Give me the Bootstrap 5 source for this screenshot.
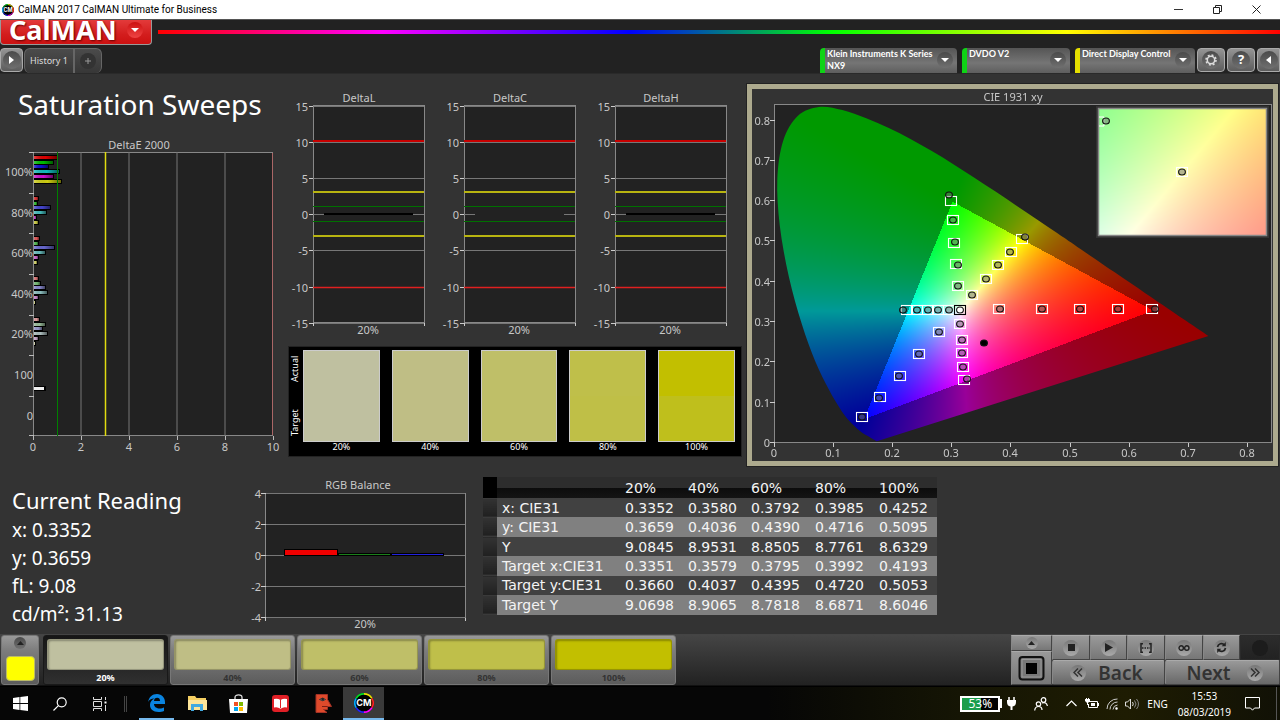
<!DOCTYPE html>
<html lang="en">
<head>
<meta charset="utf-8">
<meta name="viewport" content="width=device-width, initial-scale=1">
<title>CalMAN 2017 CalMAN Ultimate for Business</title>
<link rel="stylesheet" href="https://cdn.jsdelivr.net/npm/bootstrap@5.3.0/dist/css/bootstrap.min.css">
<style>
body{font-family:"Noto Sans","Open Sans",sans-serif;font-size:11px;line-height:1.2;background:#333;color:#ddd}
button{border:0;padding:0;color:inherit;font:inherit;background:none}
svg{display:block}
.titlebar{height:19px;background:#fff;color:#000;font-family:Roboto,sans-serif;font-size:10px;padding-left:2px}
.win-btn{width:39px;height:19px}
.brandbar{height:27px;background:#222;border-top:1px solid #555}
.brand{width:152px;height:25px;padding-bottom:4px;background:linear-gradient(#e33a3a,#d31d1d 60%,#c11);border:1px solid #999;border-top:0;border-radius:0 0 4px 4px;color:#fff}
.brand-name{font-size:27px;font-weight:700;line-height:20px;text-shadow:1px 1px 2px #600}
.disc{width:16px;height:16px;border-radius:50%;background:linear-gradient(#4a4a4a,#707070);display:flex;align-items:center;justify-content:center;flex:none}
.brand .disc{background:linear-gradient(#c11,#e44)}
.rainbow{height:4px;margin:10px 0 0 6px;background:linear-gradient(90deg,#f00,#f0f 20%,#00f 42%,#0f0 60%,#ff0 81%,#f00)}
.tabsbar{height:28px;padding-top:2px;background:#222;border-bottom:1px solid #2a2a2a}
.side-btn{height:24px;width:28px;border:1px solid #aaa;border-radius:4px;background:linear-gradient(#949494,#5c5c5c)}
.side-btn .disc{width:18px;height:18px}
.tab-item{height:25px;background:linear-gradient(#4b4b4b,#373737);border:1px solid #666;border-bottom:0}
.device{height:25px;border-radius:4px 4px 0 0;background:linear-gradient(#555,#757575 60%,#5e5e5e);color:#fff;font-family:Lato,sans-serif;font-size:9px;font-weight:700;line-height:12px;text-align:left;white-space:nowrap}
.device.ok{border-left:5px solid #0fd316}
.device.warn{border-left:5px solid #e6e000}
.board{background:#333;display:grid;grid-template-columns:288fr 454fr 538fr;grid-template-rows:auto auto;align-content:start}
.board h1{font-size:28px;line-height:36px;color:#fff;font-weight:400;padding:12px 0 16px 18px}
.board svg{width:100%;height:auto}
.board svg text{fill:#c8c8c8;font-size:11px}
.swatches{background:#000;height:111px;padding:3px 6px 0 0;border:1px solid #222;color:#fff;font-size:9px}
.swatch-item{flex:1 1 0}
.swatch{height:92px;border:1px solid #ccc}
.vert{writing-mode:vertical-rl;transform:rotate(180deg);font-size:9px;line-height:12px;height:92px;padding:6px 0;width:14px}
.cie-pane{padding:10px 2px 0 5px}
.cie{border:5px solid #adaa8e;outline:1px solid #222;background:#333}
.cie canvas{position:absolute;inset:0;width:100%;height:100%}
.lower{grid-column:1/-1;display:grid;grid-template-columns:246fr 237fr 454fr 343fr}
.reading{color:#fff;font-size:19px;line-height:28px;padding:18px 0 0 12px}
.reading h2{font-size:22px;line-height:32px;font-weight:400}
.results{height:138px;width:100%;font-family:"DejaVu Sans",sans-serif;font-size:14px;line-height:18px;color:#f4f4f4;table-layout:fixed;border-collapse:collapse}
.results th,.results td{padding:0;font-weight:400;white-space:nowrap}
.results thead th{height:21px;background:linear-gradient(#2d2d2d 50%,#0c0c0c 52%,#141414)}
.results tbody tr{background:#414141}
.results tbody tr:nth-child(even){background:#808080}
.results .sel{background:linear-gradient(#333,#202020);border-bottom:1px solid #3a3a3a}
.results thead .sel{background:#000}
.results tbody th:nth-child(2){padding-left:5px}
.strip{height:52px;background:linear-gradient(#454545,#222);border-top:1px solid #444;border-bottom:1px solid #111}
.metal{background:linear-gradient(#999,#7d7d7d 30%,#5c5c5c);border-radius:3px;border:1px solid #777}
.patch{width:125px;height:50px;color:#333;font-size:9px;font-weight:700}
.patch.active{background:linear-gradient(#161616,#303030);border-color:#191919;color:#fff}
.patch-color{height:31px;margin:3px 3px 0;border-radius:3px;border:1px solid rgba(0,0,0,.22);box-shadow:inset 1px 1px 2px rgba(0,0,0,.3)}
.patch-name{line-height:16px}
.transport{width:269px;display:grid;grid-template-columns:41px 38px 37px 38px 38px 37px 40px;grid-template-rows:25px 25px}
.transport button{background:linear-gradient(#999,#777);border:1px solid;border-color:#aaa #444 #444 #888;display:flex;align-items:center;justify-content:center}
.transport .disc{background:linear-gradient(#777,#aaa)}
.transport .nav-btn{color:#333;font-size:19px;font-weight:600;line-height:22px;background:linear-gradient(#999,#686868);border-radius:2px}
.stop-stack{grid-row:span 2}
.taskbar{height:34px;background:linear-gradient(90deg,#060606 60%,#151504 75%,#1e1c02 88%,#111106);color:#fff;border-top:1px solid #000}
.task-btn{width:41px;height:33px;display:flex;align-items:center;justify-content:center}
.task-btn.open{border-bottom:2px solid #76b9ed}
.task-btn.current{background:#3a3a3a}
.charge{width:40px;height:16px;border:2px solid #fff;background:linear-gradient(90deg,#1b9e4b 53%,#000 53%);font-size:12px;line-height:12px}
.tray{font-size:10px}
.clock{line-height:16px}
</style>
</head>
<body class="d-flex flex-column min-vh-100">

<header>
  <div class="titlebar d-flex align-items-center">
    <svg class="me-1" width="12" height="12" viewBox="0 0 24 24"><use href="#cm-logo"/></svg>
    <span class="flex-grow-1">CalMAN 2017 CalMAN Ultimate for Business</span>
    <button class="win-btn" aria-label="Minimize"><svg class="mx-auto" width="9" height="9" viewBox="0 0 9 9"><path d="M0 4.500h9" stroke="#333"/></svg></button>
    <button class="win-btn" aria-label="Restore"><svg class="mx-auto" width="9" height="9" viewBox="0 0 9 9"><path d="M.5 2.500h6v6h-6zM2.500 2.500v-2h6v6h-2" fill="none" stroke="#222"/></svg></button>
    <button class="win-btn me-1" aria-label="Close"><svg class="mx-auto" width="9" height="9" viewBox="0 0 9 9"><path d="M.5.5l8 8m0-8l-8 8" stroke="#222"/></svg></button>
  </div>
  <div class="brandbar d-flex">
    <button class="brand d-flex align-items-center justify-content-between ps-2 pe-1">
      <span class="brand-name">CalMAN</span>
      <span class="disc me-1"><svg width="8" height="4" viewBox="0 0 8 4"><path d="M0 0h8L4 4z" fill="#fff"/></svg></span>
    </button>
    <div class="rainbow flex-grow-1"></div>
  </div>
  <nav class="tabsbar d-flex align-items-start">
    <button class="side-btn d-flex align-items-center justify-content-center" style="width:23px" aria-label="Expand"><span class="disc"><svg width="5" height="8" viewBox="0 0 5 8"><path d="M0 0v8l5-4z" fill="#fff"/></svg></span></button>
    <button class="tab-item rounded-start text-nowrap" style="width:50px;margin-left:1px;font-size:9px">History 1</button>
    <button class="tab-item rounded-end d-flex align-items-center justify-content-center" style="width:28px" aria-label="Add history"><span class="disc" style="background:#333"><svg width="6" height="6" viewBox="0 0 6 6"><path d="M3 0v6M0 3h6" stroke="#999"/></svg></span></button>
    <div class="ms-auto d-flex" style="gap:5px">
      <button class="device ok d-flex justify-content-between" style="width:137px;padding:0 4px 0 2px"><span>Klein Instruments K Series<br>NX9</span><span class="disc mt-1"><svg width="8" height="4" viewBox="0 0 8 4"><path d="M0 0h8L4 4z" fill="#fff"/></svg></span></button>
      <button class="device ok d-flex justify-content-between" style="width:108px;padding:0 4px 0 2px"><span>DVDO V2</span><span class="disc mt-1"><svg width="8" height="4" viewBox="0 0 8 4"><path d="M0 0h8L4 4z" fill="#fff"/></svg></span></button>
      <button class="device warn d-flex justify-content-between" style="width:120px;padding:0 4px 0 2px"><span>Direct Display Control</span><span class="disc mt-1"><svg width="8" height="4" viewBox="0 0 8 4"><path d="M0 0h8L4 4z" fill="#fff"/></svg></span></button>
    </div>
    <div class="d-flex" style="gap:2px;margin-left:2px">
      <button class="side-btn d-flex align-items-center justify-content-center" aria-label="Settings"><span class="disc"><svg width="12" height="12" viewBox="0 0 12 12" fill="none" stroke="#ddd"><circle cx="6" cy="6" r="3.700" stroke-width="1.500"/><circle cx="6" cy="6" r="5" stroke-width="1.600" stroke-dasharray="1.960 1.960"/></svg></span></button>
      <button class="side-btn d-flex align-items-center justify-content-center fw-bold text-white" style="font-size:13px" aria-label="Help"><span class="disc">?</span></button>
      <button class="side-btn d-flex align-items-center justify-content-center rounded-end-0" style="width:23px" aria-label="Collapse"><span class="disc"><svg width="5" height="8" viewBox="0 0 5 8"><path d="M5 0v8L0 4z" fill="#fff"/></svg></span></button>
    </div>
  </nav>
</header>

<main class="board flex-grow-1">
  <section>
    <h1 class="mb-0">Saturation Sweeps</h1>
    <svg viewBox="0 138 288 322" id="deltaE" role="img" aria-label="DeltaE 2000 chart"></svg>
  </section>
  <section>
    <svg viewBox="288 74 454 272" id="deltas" role="img" aria-label="DeltaL, DeltaC and DeltaH charts"></svg>
    <div class="swatches d-flex">
      <div class="vert d-flex justify-content-between flex-row-reverse"><span>Actual</span><span>Target</span></div>
      <div class="d-flex flex-grow-1 text-center" id="swatches" style="gap:12px"></div>
    </div>
  </section>
  <section class="cie-pane">
    <div class="cie">
      <div class="position-relative">
        <canvas id="gamut" width="521" height="372"></canvas>
        <svg class="position-relative" viewBox="752 89 521 372" id="cie" role="img" aria-label="CIE 1931 xy chromaticity chart"></svg>
      </div>
    </div>
  </section>
  <div class="lower">
    <section class="reading">
      <h2 class="mb-0">Current Reading</h2>
      <div>x: 0.3352</div><div>y: 0.3659</div><div>fL: 9.08</div><div>cd/m²: 31.13</div>
    </section>
    <svg viewBox="246 466 237 165" id="rgb" role="img" aria-label="RGB Balance chart"></svg>
    <div style="padding-top:11px">
      <table class="results">
        <colgroup><col style="width:14px"><col><col style="width:63px"><col style="width:63px"><col style="width:64px"><col style="width:64px"><col style="width:58px"></colgroup>
        <thead><tr><th class="sel"></th><th></th><th>20%</th><th>40%</th><th>60%</th><th>80%</th><th>100%</th></tr></thead>
        <tbody>
          <tr><th class="sel"></th><th>x: CIE31</th><td>0.3352</td><td>0.3580</td><td>0.3792</td><td>0.3985</td><td>0.4252</td></tr>
          <tr><th class="sel"></th><th>y: CIE31</th><td>0.3659</td><td>0.4036</td><td>0.4390</td><td>0.4716</td><td>0.5095</td></tr>
          <tr><th class="sel"></th><th>Y</th><td>9.0845</td><td>8.9531</td><td>8.8505</td><td>8.7761</td><td>8.6329</td></tr>
          <tr><th class="sel"></th><th>Target x:CIE31</th><td>0.3351</td><td>0.3579</td><td>0.3795</td><td>0.3992</td><td>0.4193</td></tr>
          <tr><th class="sel"></th><th>Target y:CIE31</th><td>0.3660</td><td>0.4037</td><td>0.4395</td><td>0.4720</td><td>0.5053</td></tr>
          <tr><th class="sel"></th><th>Target Y</th><td>9.0698</td><td>8.9065</td><td>8.7818</td><td>8.6871</td><td>8.6046</td></tr>
        </tbody>
      </table>
    </div>
  </div>
</main>

<div class="strip d-flex">
  <button class="metal d-flex flex-column align-items-center" style="width:38px;height:50px;margin-left:1px" aria-label="Current patch">
    <span class="disc" style="width:12px;height:12px;margin-top:1px"><svg width="7" height="4" viewBox="0 0 7 4"><path d="M0 4h7L3.500 0z" fill="#222"/></svg></span>
    <span class="rounded-1 mt-auto" style="width:29px;height:25px;background:#ff0;border:1px solid #bb6;margin-bottom:3px"></span>
  </button>
  <div class="d-flex ms-1" id="patches" style="gap:2px"></div>
  <div class="transport ms-auto">
    <div class="stop-stack d-flex flex-column">
      <button style="height:16px" aria-label="Raise"><span class="disc" style="width:12px;height:12px"><svg width="7" height="4" viewBox="0 0 7 4"><path d="M0 4h7L3.500 0z" fill="#222"/></svg></span></button>
      <button class="flex-grow-1" aria-label="Stop reading"><svg width="27" height="25" viewBox="0 0 27 25"><rect x="1.500" y="1" width="24" height="22.500" rx="3" fill="#777" stroke="#111" stroke-width="2"/><rect x="4" y="3.500" width="19" height="17.500" fill="none" stroke="#999"/><path d="M8 7h11v11H8z" fill="#000"/></svg></button>
    </div>
    <button aria-label="Stop"><span class="disc"><svg width="7" height="7" viewBox="0 0 7 7"><path d="M0 0h7v7H0z" fill="#222"/></svg></span></button>
    <button aria-label="Play"><span class="disc"><svg width="8" height="9" viewBox="0 0 8 9"><path d="M0 0v9l8-4.500z" fill="#222"/></svg></span></button>
    <button aria-label="Range"><span class="disc"><svg width="12" height="10" viewBox="0 0 12 10" fill="none" stroke="#222" stroke-width="1.500"><path d="M3 .8H1v8.400h2M9 .8h2v8.400H9"/><path d="M2 5h8" stroke-dasharray="1.500 1"/></svg></span></button>
    <button aria-label="Continuous"><span class="disc"><svg width="12" height="6" viewBox="0 0 12 6" fill="none" stroke="#222" stroke-width="1.400"><circle cx="3.200" cy="3" r="2.200"/><circle cx="8.800" cy="3" r="2.200"/></svg></span></button>
    <button aria-label="Refresh"><span class="disc"><svg width="11" height="11" viewBox="0 0 11 11" fill="none" stroke="#222" stroke-width="1.700"><path d="M1.500 5A4 4 0 0 1 8.500 3M9.500 6A4 4 0 0 1 2.500 8"/><path d="M9.800 0v4.200H5.700zM1.200 11V6.800h4.100z" fill="#222" stroke="none"/></svg></span></button>
    <button style="background:linear-gradient(#2c2c2c,#222);border-color:#2a2a2a" aria-label="Record"><span class="disc" style="background:#1c1c1c"></span></button>
    <button class="nav-btn gap-2" style="grid-column:span 3"><span class="disc"><svg width="10" height="9" viewBox="0 0 10 9" fill="none" stroke="#333" stroke-width="1.500"><path d="M5 .5l-4 4 4 4M9 .5l-4 4 4 4"/></svg></span><span class="px-1">Back</span></button>
    <button class="nav-btn gap-2" style="grid-column:span 3"><span class="px-1">Next</span><span class="disc ms-1"><svg width="10" height="9" viewBox="0 0 10 9" fill="none" stroke="#333" stroke-width="1.500"><path d="M1 .5l4 4-4 4M5 .5l4 4-4 4"/></svg></span></button>
  </div>
</div>

<footer class="taskbar d-flex align-items-center">
  <button class="task-btn" aria-label="Start"><svg width="15" height="15" viewBox="0 0 15 15" fill="#fff"><path d="M0 2l6.500-.9v6H0zM7.300 1L15 0v7.100H7.300zM0 7.900h6.500v6L0 13zM7.300 7.900H15V15l-7.700-1z"/></svg></button>
  <button class="task-btn" style="width:38px" aria-label="Search"><svg width="14" height="14" viewBox="0 0 14 14" fill="none" stroke="#fff" stroke-width="1.200"><circle cx="8.700" cy="5.300" r="4.500"/><path d="M5.400 8.600L.5 13.500"/></svg></button>
  <button class="task-btn" aria-label="Task view"><svg width="15" height="14" viewBox="0 0 15 14" fill="none" stroke="#ddd"><path d="M1.500 0v2.500h8V0M1.500 14v-2.500h8V14M1.500 4.500h8v5h-8zM13.500 0v3M13.500 8v6"/><path d="M12.500 4.500h2v2h-2z" fill="#fff" stroke="none"/></svg></button>
  <span style="width:3px;height:16px;border:solid #444;border-width:0 1px;margin:0 12px 0 4px"></span>
  <button class="task-btn open" style="width:35px" aria-label="Edge"><svg width="17" height="18" viewBox="0 0 17 18"><path d="M0 8C1 3 4 0 9 0c5 0 8 4 8 8v2H6c0 3 3 4.500 5.500 4.500 2 0 3.500-.5 4.500-1V17c-1.500.7-3.500 1-5.500 1C5 18 2 15 2 11c0-3 2-5.500 4.500-6.500C3 4.500 1 6 0 8zm6-1h6c0-2-1-3.200-2.800-3.200C7.300 3.800 6.200 5 6 7z" fill="#0a84e0"/></svg></button>
  <button class="task-btn" style="width:47px" aria-label="File Explorer"><svg width="19" height="17" viewBox="0 0 19 17"><path d="M0 1h7l1.500 2H18v12H0z" fill="#f5cf62"/><path d="M0 5h19v10H0z" fill="#fde59a"/><path d="M3 9h12v7h-3v-4H6v4H3z" fill="#41a9e0"/></svg></button>
  <button class="task-btn" style="width:35px" aria-label="Store"><svg width="19" height="20" viewBox="0 0 19 20"><path d="M6 6V3.500C6 0 13 0 13 3.500V6" fill="none" stroke="#ddd" stroke-width="1.300"/><path d="M0 5h19l-1 14H1z" fill="#fff"/><path d="M5 8h4v4H5z" fill="#f25022"/><path d="M10 8h4v4h-4z" fill="#7fba00"/><path d="M5 13h4v4H5z" fill="#00a4ef"/><path d="M10 13h4v4h-4z" fill="#ffb900"/></svg></button>
  <button class="task-btn" style="width:48px" aria-label="Reader"><svg width="17" height="17" viewBox="0 0 17 17"><rect width="17" height="17" rx="3" fill="#e01f26"/><path d="M2 4q3.500-1 6.500 1Q11.500 3 15 4v8.500q-3.500-1-6.500 1.200Q5.500 11.500 2 12.500z" fill="#fff"/><path d="M8.500 5v8" stroke="#e01f26"/></svg></button>
  <button class="task-btn" style="width:39px" aria-label="Face application"><svg width="17" height="19" viewBox="0 0 17 19"><path d="M1 .5h11.500v5L16.500 12.500h-4v3H8.500L12 18.500H1z" fill="#df4a2b" stroke="#a33226"/><path d="M4.500 5.500q3.500-3 6 0-2.500 2.500-6 0z" fill="#c98" stroke="#333"/><circle cx="7.700" cy="5.300" r="1.200" fill="#222"/><path d="M7 12.500h5.500" stroke="#7a1d12"/></svg></button>
  <button class="task-btn open current" aria-label="CalMAN"><svg width="20" height="20" viewBox="0 0 24 24"><use href="#cm-logo"/></svg></button>
  <div class="tray ms-auto d-flex align-items-center">
    <div class="charge text-center">53%</div><span style="width:2px;height:9px;background:#fff;margin-right:5px"></span>
    <svg width="9" height="13" viewBox="0 0 9 13"><path d="M2 0v3M7 0v3" stroke="#fff" stroke-width="1.500"/><path d="M0 3h9v2q0 4-3.500 4.500V13h-2V9.500Q0 9 0 5z" fill="#fff"/></svg>
    <svg style="margin-left:18px" width="14" height="14" viewBox="0 0 14 14" fill="none" stroke="#fff" stroke-width="1.200"><circle cx="9.500" cy="3" r="2.300"/><circle cx="4.500" cy="7" r="2.200"/><path d="M.7 13.500q.3-4 3.800-4t3.500 3.500M8 6q4.500-1.500 5.400 3"/></svg>
    <svg style="margin-left:18px" width="11" height="7" viewBox="0 0 11 7" fill="none" stroke="#fff" stroke-width="1.200"><path d="M.5 6l5-5 5 5"/></svg>
    <svg style="margin-left:8px" width="14" height="11" viewBox="0 0 14 11"><path d="M3 3.500h9.500v6H3.500V6" fill="none" stroke="#fff"/><path d="M13 5h1v3h-1zM6 5h4v3H6zM0 1h1V0h1v1h1V0h1v1h1v2L3 5v2H2V5L0 3z" fill="#fff"/></svg>
    <svg style="margin-left:7px" width="12" height="12" viewBox="0 0 12 12" fill="none" stroke="#ccc"><path d="M1 11A10 10 0 0 1 11.500 1M4 11.500A7.500 7.500 0 0 1 11.500 4M7 11.500A5 5 0 0 1 11.500 7" /><circle cx="10.500" cy="10.500" r="1" fill="#fff"/></svg>
    <svg style="margin-left:7px" width="14" height="12" viewBox="0 0 14 12" fill="none" stroke="#ddd"><path d="M.5 4h2l3-3v10l-3-3h-2zM7.500 4q1.500 2 0 4"/><path d="M9.500 2.500q3 3.500 0 7M11.500 1q4 5 0 10" stroke="#888"/></svg>
    <span class="ms-2">ENG</span>
    <div class="clock text-center" style="margin-left:10px">15:53<br>08/03/2019</div>
    <button style="margin-left:14px" aria-label="Notifications"><svg width="15" height="14" viewBox="0 0 15 14" fill="none" stroke="#fff"><path d="M.5.5h14v10.500H9.500L7.500 13.200 5.500 11H.5z"/></svg></button>
    <span style="width:1px;height:33px;background:#555;margin:0 3px 0 16px"></span>
  </div>
</footer>

<svg width="0" height="0" class="position-absolute" aria-hidden="true">
  <defs>
    <symbol id="cm-logo" viewBox="0 0 24 24"><circle cx="12" cy="12" r="12" fill="#000"/><g fill="none" stroke-width="2"><path d="M12 1A11 11 0 0 1 21.500 6.500" stroke="#e8e000"/><path d="M21.500 6.500A11 11 0 0 1 21.500 17.500" stroke="#f22"/><path d="M21.500 17.500A11 11 0 0 1 12 23" stroke="#f0f"/><path d="M12 23A11 11 0 0 1 2.500 17.500" stroke="#22f"/><path d="M2.500 17.500A11 11 0 0 1 2.500 6.500" stroke="#0af"/><path d="M2.500 6.500A11 11 0 0 1 12 1" stroke="#0d2"/></g><text x="12" y="16" text-anchor="middle" font-size="11" font-weight="700" fill="#fff" font-family="Inter, sans-serif">CM</text></symbol>
    <linearGradient id="barShade" x1="0" x2="1" y1="0" y2="0"><stop offset="0" stop-color="#fff" stop-opacity=".25"/><stop offset=".5" stop-color="#000" stop-opacity="0"/><stop offset="1" stop-color="#000" stop-opacity=".5"/></linearGradient>
  </defs>
</svg>

<script src="https://cdn.jsdelivr.net/npm/bootstrap@5.3.0/dist/js/bootstrap.bundle.min.js"></script>
<script>
const $ = id => document.getElementById(id);
const rect = (x, y, w, h, fill, extra = '') => `<rect x="${x}" y="${y}" width="${w}" height="${h}" fill="${fill}" ${extra}/>`;
const line = (x1, y1, x2, y2, stroke, w = 1) => `<path d="M${x1} ${y1}L${x2} ${y2}" stroke="${stroke}" stroke-width="${w}" fill="none"/>`;
const label = (x, y, s, anchor = 'middle') => `<text x="${x}" y="${y}" text-anchor="${anchor}">${s}</text>`;

// DeltaE 2000: one group of six bars per saturation level
{
  let s = label(139, 149, 'DeltaE 2000') + rect(33.5, 152.5, 239, 283, '#222', 'stroke="#888"');
  for (let i = 1; i < 5; i++) s += line(33 + i * 48, 152, 33 + i * 48, 436, '#777', 1);
  const groups = [
    [156, [23, 19, 14, 25, 19, 27], ['#d00', '#0b0', '#11c', '#1bb', '#c1c', '#cc1']],
    [197, [4, 3, 16, 12, 2, 4], ['#d33', '#3b3', '#44c', '#4bb', '#c4c', '#cc4']],
    [237, [5, 4, 20, 11, 4, 3], ['#d55', '#5b5', '#66c', '#6bb', '#c6c', '#cc6']],
    [277, [4, 6, 11, 13, 4, 1], ['#d77', '#7b7', '#88c', '#8bb', '#c8c', '#cc8']],
    [318, [5, 11, 8, 13, 4, 1], ['#d99', '#9b9', '#99c', '#abb', '#cac', '#cca']]
  ];
  for (const [y, widths, colors] of groups)
    widths.forEach((w, i) => { const by = y + Math.round(i * 4.7);
      s += rect(34, by - 1, w + 1, 5, '#000') + rect(34, by, w, 3, colors[i]) + rect(34, by, w, 3, 'url(#barShade)'); });
  s += rect(34, 386, 12, 5, '#000') + rect(34, 387, 10, 3, '#eee');
  s += line(57.5, 152, 57.5, 436, '#008000') + line(105.5, 152, 105.5, 436, '#e0dc10', 1.500) + line(272.5, 153, 272.5, 435, '#a66');
  [152, 193, 233, 274, 315, 355, 396, 435].forEach(y => s += line(29, y + .5, 34, y + .5, '#bbb'));
  ['100%', '80%', '60%', '40%', '20%', '100', '0'].forEach((t, i) => s += label(33, 176 + Math.round(i * 40.6), t, 'end'));
  for (let i = 0; i < 6; i++) s += line(33.5 + i * 48, 436, 33.5 + i * 48, 440, '#bbb') + label(33 + i * 48, 451, i * 2);
  $('deltaE').innerHTML = s;
}

// DeltaL / DeltaC / DeltaH
$('deltas').innerHTML = ['DeltaL', 'DeltaC', 'DeltaH'].map((name, n) => {
  const x = 313 + n * 151;
  let s = label(x + 46, 102, name) + rect(x + .5, 105.5, 111, 217, '#222', 'stroke="#888"');
  [15, 10, 5, 0, -5, -10, -15].forEach((v, i) => { const y = [106, 142, 178, 214, 250, 287, 323][i];
    s += line(x, y + .5, x + 111, y + .5, '#777') + line(x - 4, y + .5, x, y + .5, '#ccc') + label(x - 5, y + 5, v, 'end'); });
  s += line(x + 11, 214, x + 100, 214, n === 1 ? '#222' : '#000', 2);
  s += line(x, 141, x + 111, 141, '#c80000', 2) + line(x, 287.5, x + 111, 287.5, '#e02020', 1.500);
  s += line(x, 192, x + 111, 192, '#b8b410', 2) + line(x, 236, x + 111, 236, '#b8b410', 2);
  s += line(x, 206.5, x + 111, 206.5, '#007000') + line(x, 221.5, x + 111, 221.5, '#007000');
  s += line(x + .5, 323, x + .5, 326, '#ccc') + line(x + 111.5, 323, x + 111.5, 326, '#ccc');
  return s + label(x + 55, 334, '20%');
}).join('');

// RGB balance
{
  let s = label(358, 489, 'RGB Balance') + rect(265.5, 493.5, 200, 124, '#222', 'stroke="#888"');
  [4, 2, 0, -2, -4].forEach((v, i) => { const y = 493 + i * 31;
    s += line(265, y + .5, 465, y + .5, '#777') + line(261, y + .5, 266, y + .5, '#ccc') + label(261, y + 5, v, 'end'); });
  s += rect(284, 549, 54, 7, '#000') + rect(285, 550, 52, 5, '#f00000') + rect(338, 553, 53, 3, '#000') + rect(339, 554, 51, 1, '#1a801a') + rect(391, 553, 53, 3, '#000') + rect(392, 554, 51, 1, '#2222e0');
  s += line(265.5, 618, 265.5, 621, '#ccc') + line(465.5, 618, 465.5, 621, '#ccc') + label(365, 628, '20%');
  $('rgb').innerHTML = s;
}

// Colour swatches and pattern buttons
const patches = [['20%', '#bfc0a0', '#bfc0a0'], ['40%', '#bfbe85', '#bfbe85'], ['60%', '#bfbf68', '#bfbf68'], ['80%', '#bfbf4a', '#bfbf47'], ['100%', '#c2bf00', '#bfbf1c']];
$('swatches').innerHTML = patches.map(([t, a, b]) => `<div class="swatch-item"><div class="swatch" style="background:linear-gradient(${a} 50%,${b} 50%)"></div><div>${t}</div></div>`).join('');
$('patches').innerHTML = patches.map(([t, a], i) => `<button class="metal patch ${i ? '' : 'active'}"><div class="patch-color" style="background:${a}"></div><div class="patch-name">${t}</div></button>`).join('');

// CIE axes and measurement markers
{
  let s = label(1013, 101, 'CIE 1931 xy') + rect(774.5, 104.5, 497, 338, 'none', 'stroke="#888"');
  for (let i = 0; i < 9; i++) {
    const x = 774 + Math.round(i * 59.1), y = 443 - Math.round(i * 40.3);
    s += line(x + .5, 443, x + .5, 447, '#ccc') + line(770, y - .5, 775, y - .5, '#ccc');
    s += label(x, 457, i ? '0.' + i : '0') + label(770, y + 4, i ? '0.' + i : '0', 'end');
  }
  s += rect(1098.5, 108.5, 168, 127, 'none', 'stroke="#888" stroke-width="1.500"');
  const sq = (x, y, c = '#fff') => rect(x - 5.5, y - 4.5, 11, 9, 'none', `stroke="${c}" stroke-width="1.100"`);
  const dot = (x, y, f = 'rgba(110,110,110,.5)') => `<ellipse cx="${x}" cy="${y}" rx="3.400" ry="3" fill="${f}" stroke="#111" stroke-width="1.100"/>`;
  // each entry: target x, target y, then measured x, y where they differ
  [[951,201,949,195],[953,220],[954,243,955,242],[956,264,958,265],[958,286],
   [1022,239,1025,237],[1011,252,1010,252],[998,265],[986,279],[972,295],
   [907,310,903,310],[917,310],[928,310],[938,310],[949,310],
   [939,332],[919,354],[900,376,899,376],[880,397,879,398],[862,417],
   [960,324],[962,340],[962,353],[963,367],[964,380,967,379],
   [999,309,1000,309],[1042,309],[1080,309],[1118,309],[1152,309,1155,309],[1182,172]
  ].forEach(([x, y, mx = x, my = y]) => s += sq(x, y) + dot(mx, my));
  s += sq(960, 310, '#000') + dot(960, 310, '#fff') + dot(984, 343, '#000');
  s += '<path d="M1099 117h5v9h-5" fill="none" stroke="#fff"/>' + dot(1106, 121);
  $('cie').innerHTML = s;
}

// Chromaticity fill, computed from xy for every pixel
{
  const ctx = $('gamut').getContext('2d');
  const ox = 23, oy = 354, sx = 590, sy = 403;
  const locus = [[.1741,.005],[.1714,.0051],[.1644,.0109],[.1566,.0177],[.144,.0297],[.1241,.0578],[.1096,.0868],[.0913,.1327],[.0687,.2007],[.0454,.295],[.0235,.4127],[.0082,.5384],[.0039,.6548],[.0139,.7502],[.0389,.812],[.0743,.8338],[.1142,.8262],[.1547,.8059],[.1929,.7816],[.2296,.7543],[.2658,.7243],[.3016,.6923],[.3373,.6589],[.3731,.6245],[.4087,.5896],[.4441,.5547],[.4788,.5202],[.5125,.4866],[.5752,.4242],[.627,.3725],[.6658,.334],[.6915,.3083],[.7079,.292],[.7347,.2653]];
  const color = (x, y) => {
    y = Math.max(y, .001);
    const X = x / y, Z = (1 - x - y) / y;
    const lin = [3.2406 * X - 1.5372 - .4986 * Z, -.9689 * X + 1.8758 + .0415 * Z, .0557 * X - .204 + 1.057 * Z];
    const top = Math.max(...lin), inside = Math.min(...lin) >= 0;
    return lin.map(v => 255 * Math.max(v, 0) / top * (inside ? 1 : .6));
  };
  const field = (w, h, fx, fy) => {
    const c = document.createElement('canvas'); c.width = w; c.height = h;
    const g = c.getContext('2d'), img = g.createImageData(w, h);
    for (let j = 0; j < h; j++) for (let i = 0; i < w; i++) {
      const [r, gg, b] = color(fx(i), fy(j)), k = 4 * (j * w + i);
      img.data[k] = r; img.data[k + 1] = gg; img.data[k + 2] = b; img.data[k + 3] = 255;
    }
    g.putImageData(img, 0, 0); return c;
  };
  ctx.fillStyle = '#222'; ctx.fillRect(23, 16, 497, 338);
  const P = locus.map(([x, y]) => [ox + x * sx, oy - y * sy]), last = P.length - 1;
  ctx.save(); ctx.beginPath(); ctx.moveTo(...P[0]);
  // Catmull-Rom segments keep the horseshoe smooth
  for (let i = 0; i < last; i++) {
    const a = P[Math.max(i - 1, 0)], b = P[i], c = P[i + 1], d = P[Math.min(i + 2, last)];
    ctx.bezierCurveTo(b[0] + (c[0] - a[0]) / 6, b[1] + (c[1] - a[1]) / 6, c[0] - (d[0] - b[0]) / 6, c[1] - (d[1] - b[1]) / 6, c[0], c[1]);
  }
  ctx.closePath(); ctx.clip();
  ctx.drawImage(field(521, 372, i => (i - ox) / sx, j => (oy - j) / sy), 0, 0);
  ctx.restore();
  ctx.fillStyle = '#333'; ctx.fillRect(344, 17, 173, 132);
  ctx.drawImage(field(168, 127, i => .31 + i / 3300, j => .392 - j / 2400), 347, 20);
}
</script>
</body>
</html>
